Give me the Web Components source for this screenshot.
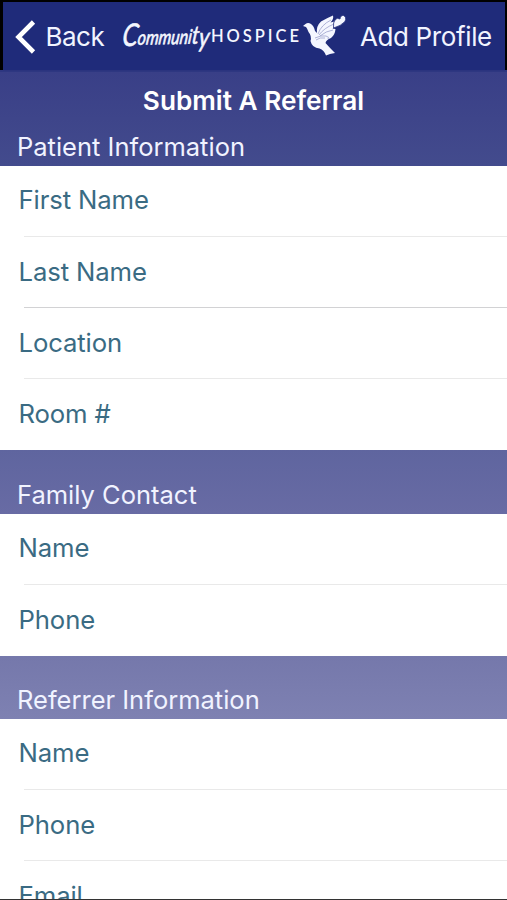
<!DOCTYPE html>
<html lang="en">
<head>
<meta charset="utf-8">
<title>Submit A Referral</title>
<style>
html,body{margin:0;height:100%;overflow:hidden}
body{font-family:Inter,"Liberation Sans",sans-serif}
</style>
</head>
<body>
<referral-app>
  <nav-bar></nav-bar>
  <form-section heading="Patient Information" title-text="Submit A Referral" style="--head:94px">
    <form-row>First Name</form-row><form-row class="strong">Last Name</form-row><form-row>Location</form-row><form-row>Room #</form-row>
  </form-section>
  <form-section heading="Family Contact" style="--head:64px">
    <form-row>Name</form-row><form-row>Phone</form-row>
  </form-section>
  <form-section heading="Referrer Information" style="--head:63px">
    <form-row>Name</form-row><form-row>Phone</form-row><form-row>Email</form-row>
  </form-section>
</referral-app>
<script>
class Base extends HTMLElement {
  constructor() {
    super();
    this.attachShadow({ mode: 'open' }).innerHTML = this.render();
  }
}
customElements.define('dove-logo', class extends Base {
  render() {
    return `<style>:host{display:block;width:226px;height:48px}svg{display:block}</style>
<svg width="226" height="48" viewBox="122 12 226 48" fill="#f4f6ff">
  <text transform="translate(121.500 46) rotate(-1) skewX(-8)" font-family="Lato" font-style="italic" font-size="20" textLength="87" lengthAdjust="spacingAndGlyphs" stroke="#f4f6ff" stroke-width=".6"><tspan font-size="31">C</tspan><tspan dy="-1">ommuni</tspan><tspan font-size="25">t</tspan><tspan font-size="27" dy="3">y</tspan></text>
  <text x="211" y="42.300" font-family="Lato" font-weight="600" font-size="16.500" textLength="88">HOSPICE</text>
  <path d="M303 26 L305.500 24 Q308 22 311 24 Q314 26 315 31 L317 33 Q316 26 321 21.500 Q327 18 333 15.500 Q334 19 330.500 22.500 L338 20.500 Q338 25 332.500 28.500 L335.500 29 Q335 35 331 38 Q326 40 325.500 43 Q329 47 335 53 L330 54 L326 55.500 Q324 50 319.500 48.500 Q312 48 310.500 41 Q312 36 308.500 32 Q307 28 306 27 Z"/>
  <path d="M318 34 Q321 25 331 20 M319 35 Q324 28 334 24 M320 36 Q326 31 333 30 M315 38 Q321 35 326 36 Q330 37 328 39 M316 40 Q320 37 325 38" fill="none" stroke="#8f95c6" stroke-width=".7"/>
  <path d="M333.500 28 Q333 22 335 20 Q337 17 340 19 Q340.500 15 343.500 15.500 Q347 17 345 21.500 Q341 26 333.500 28 Z" stroke="#1f2b7a" stroke-width=".8"/>
</svg>`;
  }
});
customElements.define('nav-bar', class extends Base {
  render() {
    return `<style>
:host{display:block;box-sizing:border-box;height:72px;padding:2px 2px 0 3px;background:linear-gradient(#000 70px,#2e3781 70px)}
.bar{height:69px;background:#1f2b7a;display:flex;align-items:center;color:#f1f4ff;font-size:26px;line-height:32px;border-bottom:1px solid #2b347f;box-sizing:border-box;white-space:nowrap}
.back{display:flex;align-items:center;width:119px;padding:1px 0 0 12px;box-sizing:border-box}
.back span{margin-left:9.500px;letter-spacing:-.5px}
.add{margin-left:12px;padding-top:2px;letter-spacing:-.38px}
</style>
<div class="bar"><div class="back"><svg width="21" height="36" viewBox="0 0 21 36" fill="none" stroke="#fff" stroke-width="4.600"><path d="M18.500 3 L3.500 18 L18.500 33"/></svg><span>Back</span></div><dove-logo></dove-logo><div class="add">Add Profile</div></div>`;
  }
});
customElements.define('form-row', class extends Base {
  render() {
    return `<style>
:host{display:block;height:71px;box-sizing:border-box;padding:19px 0 0 18.500px;font-size:25.700px;line-height:32px;color:#3a6b83;letter-spacing:-.12px;background:linear-gradient(#e9e9e9,#e9e9e9) 24px 100%/100% 1px no-repeat}
:host(:first-child){padding-top:18px}
:host(.strong){background-image:linear-gradient(#d2d2d4,#d2d2d4)}
:host(:last-child){background:none}
</style><slot></slot>`;
  }
});
customElements.define('form-section', class extends Base {
  render() {
    const title = this.getAttribute('title-text');
    return `<style>
:host{display:block}
header{height:var(--head);box-sizing:border-box;display:flex;flex-direction:column;justify-content:flex-end;color:#f1f3ff;padding:0 17px 3px;font-size:25.500px;line-height:32px}
h1{font-size:26.200px;line-height:32px;font-weight:600;text-align:center;margin:0 0 14px;color:#fff}
h2{font:inherit;margin:0}
.rows{background:#fff}
</style>
<header>${title ? `<h1>${title}</h1>` : ''}<h2>${this.getAttribute('heading')}</h2></header>
<div class="rows"><slot></slot></div>`;
  }
});
customElements.define('referral-app', class extends Base {
  render() {
    return `<style>
:host{display:block;box-sizing:border-box;width:507px;height:900px;overflow:hidden;border-bottom:1px solid #333;background:linear-gradient(#393f87 72px,#434b8d 166px,#5f659f 450px,#686ba4 514px,#7578ab 656px,#7e81b2 719px)}
</style><slot></slot>`;
  }
});
</script>
</body>
</html>
